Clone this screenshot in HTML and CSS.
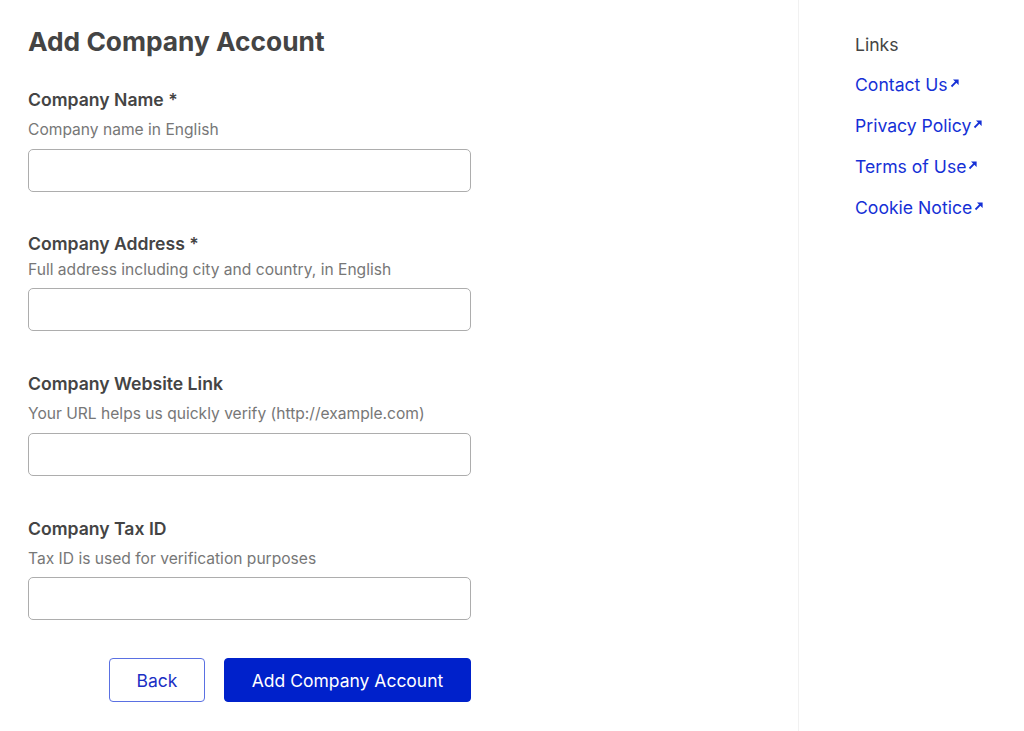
FILE: index.html
```html
<!DOCTYPE html>
<html lang="en">
<head>
<meta charset="utf-8">
<title>Add Company Account</title>
<link rel="stylesheet" href="styles.css">
</head>
<body>
<div class="page">
  <main class="main">
    <h1 class="title">Add Company Account</h1>
    <form class="form">
      <div class="field field--first">
        <label class="label" for="name">Company Name *</label>
        <div class="hint">Company name in English</div>
        <input class="input" id="name" type="text">
      </div>
      <div class="field field--tight">
        <label class="label" for="address">Company Address *</label>
        <div class="hint">Full address including city and country, in English</div>
        <input class="input" id="address" type="text">
      </div>
      <div class="field">
        <label class="label" for="website">Company Website Link</label>
        <div class="hint">Your URL helps us quickly verify (http://example.com)</div>
        <input class="input" id="website" type="text">
      </div>
      <div class="field field--last">
        <label class="label" for="tax">Company Tax ID</label>
        <div class="hint">Tax ID is used for verification purposes</div>
        <input class="input" id="tax" type="text">
      </div>
      <div class="actions">
        <button type="button" class="btn btn--secondary">Back</button>
        <button type="submit" class="btn btn--primary">Add Company Account</button>
      </div>
    </form>
  </main>
  <aside class="side">
    <div class="side-title">Links</div>
    <ul class="links">
      <li><a class="link" href="#">Contact Us<svg class="ext" viewBox="0 0 10 10" aria-hidden="true"><path d="M1.5 8.5 L6.8 3.2" stroke="currentColor" stroke-width="1.8" fill="none"/><path d="M3 1.4 H8.6 V7 Z" fill="currentColor"/></svg></a></li>
      <li><a class="link" href="#">Privacy Policy<svg class="ext" viewBox="0 0 10 10" aria-hidden="true"><path d="M1.5 8.5 L6.8 3.2" stroke="currentColor" stroke-width="1.8" fill="none"/><path d="M3 1.4 H8.6 V7 Z" fill="currentColor"/></svg></a></li>
      <li><a class="link" href="#">Terms of Use<svg class="ext" viewBox="0 0 10 10" aria-hidden="true"><path d="M1.5 8.5 L6.8 3.2" stroke="currentColor" stroke-width="1.8" fill="none"/><path d="M3 1.4 H8.6 V7 Z" fill="currentColor"/></svg></a></li>
      <li><a class="link" href="#">Cookie Notice<svg class="ext" viewBox="0 0 10 10" aria-hidden="true"><path d="M1.5 8.5 L6.8 3.2" stroke="currentColor" stroke-width="1.8" fill="none"/><path d="M3 1.4 H8.6 V7 Z" fill="currentColor"/></svg></a></li>
    </ul>
  </aside>
</div>
</body>
</html>
```
FILE: styles.css
```css
html, body {
  margin: 0;
  padding: 0;
  background: #fff;
}

body {
  font-family: Inter, "Liberation Sans", Arial, sans-serif;
  color: #444;
}

.page {
  display: flex;
  min-height: 731px;
}

.main {
  width: 799px;
  box-sizing: border-box;
  border-right: 1px solid #f1f1f1;
  padding: 26px 28px 0 28px;
  flex-shrink: 0;
}

.title {
  margin: 0;
  font-size: 26.3px;
  line-height: 31px;
  font-weight: 700;
  color: #444;
}

.form {
  width: 443px;
  display: flex;
  flex-direction: column;
  padding-top: 31px;
}

.field {
  display: flex;
  flex-direction: column;
  margin-bottom: 41px;
}

.field--first {
  margin-bottom: 40px;
}

.label {
  font-size: 17.6px;
  line-height: 23px;
  font-weight: 600;
  color: #444;
}

.hint {
  font-size: 15.6px;
  line-height: 21px;
  color: #777;
  margin: 8px 0 9px;
}

.field--tight .hint {
  margin: 4px 0 8px;
}

.field--last .hint {
  margin-bottom: 8px;
}

.input {
  box-sizing: border-box;
  width: 100%;
  height: 43px;
  border: 1px solid #adadad;
  border-radius: 5px;
  background: #fff;
  font: inherit;
  padding: 0 12px;
  outline: none;
}

.actions {
  display: flex;
  justify-content: flex-end;
  gap: 19px;
  margin-top: -3px;
}

.btn {
  height: 44px;
  border-radius: 4px;
  font-family: inherit;
  font-size: 17.5px;
  font-weight: 400;
  cursor: pointer;
  box-sizing: border-box;
}

.btn--secondary {
  width: 96px;
  background: #fff;
  color: #1b2fc4;
  border: 1px solid #5a70e2;
}

.btn--primary {
  width: 247px;
  background: #0021cb;
  color: #fff;
  border: 1px solid #0021cb;
}

.side {
  padding: 33px 0 0 56px;
}

.side-title {
  font-size: 17.6px;
  line-height: 23px;
  color: #444;
  margin-bottom: 17px;
}

.links {
  list-style: none;
  margin: 0;
  padding: 0;
  display: flex;
  flex-direction: column;
  gap: 18px;
}

.link {
  font-size: 17.6px;
  line-height: 23px;
  color: #1530d6;
  text-decoration: none;
  display: inline-flex;
  align-items: flex-start;
}

.ext {
  width: 10px;
  height: 10px;
  margin: 5px 0 0 2px;
}
```
